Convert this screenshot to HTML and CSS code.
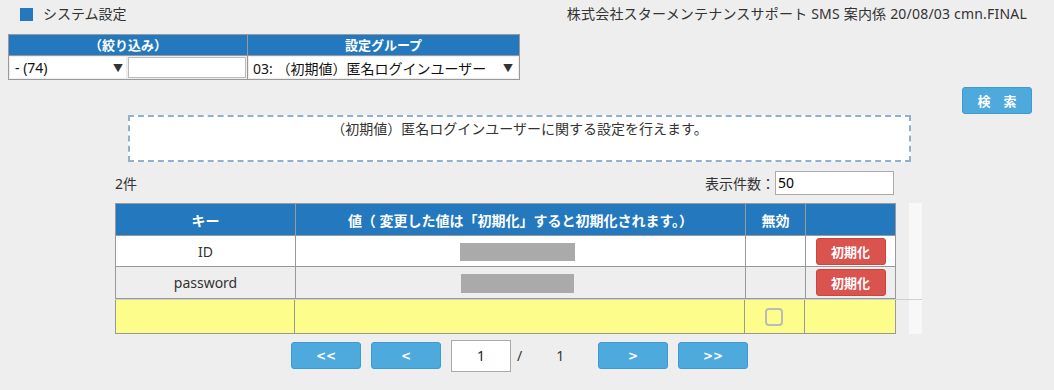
FILE: index.html
```html
<!DOCTYPE html>
<html lang="ja">
<head>
<meta charset="utf-8">
<title>システム設定</title>
<link rel="stylesheet" href="styles.css">
</head>
<body>
<div class="top">
  <div class="title"><span class="sq"></span>システム設定</div>
  <div class="info">株式会社スターメンテナンスサポート SMS 案内係 20/08/03 cmn.FINAL</div>
</div>

<table class="filter">
  <colgroup><col class="c1"><col class="c2"></colgroup>
  <tr><th>（絞り込み）</th><th>設定グループ</th></tr>
  <tr>
    <td><div class="pair"><div class="sel s1"><span>- (74)</span><span class="arr">▼</span></div><div class="txt"></div></div></td>
    <td><div class="sel s2"><span>03: （初期値）匿名ログインユーザー</span><span class="arr">▼</span></div></td>
  </tr>
</table>

<div class="search-row"><button class="btn-search">検　索</button></div>

<div class="main">
  <div class="desc">（初期値）匿名ログインユーザーに関する設定を行えます。</div>
  <div class="meta">
    <span>2件</span>
    <label class="per">表示件数：<span class="per-in">50</span></label>
  </div>
  <div class="grid">
    <div class="upper">
      <table class="data">
        <colgroup><col class="k"><col class="v"><col class="d"><col class="a"></colgroup>
        <tr><th>キー</th><th>値（ 変更した値は「初期化」すると初期化されます。）</th><th>無効</th><th></th></tr>
        <tr class="r1"><td>ID</td><td><span class="mask m1"></span></td><td></td><td><button class="btn-reset">初期化</button></td></tr>
        <tr class="r2"><td>password</td><td><span class="mask m2"></span></td><td></td><td><button class="btn-reset">初期化</button></td></tr>
      </table>
      <div class="track"></div>
    </div>
    <div class="lower">
      <table class="newrow">
        <colgroup><col class="k"><col class="v"><col class="d"><col class="a"></colgroup>
        <tr><td></td><td></td><td><span class="chk"></span></td><td></td></tr>
      </table>
      <div class="track"></div>
    </div>
  </div>
  <div class="pager">
    <button class="pbtn">&lt;&lt;</button>
    <button class="pbtn">&lt;</button>
    <div class="pg-in">1</div>
    <div class="pg-total"><span class="slash">/</span><span class="tot">1</span></div>
    <button class="pbtn">&gt;</button>
    <button class="pbtn">&gt;&gt;</button>
  </div>
</div>
</body>
</html>
```

FILE: styles.css
```css
* { box-sizing: border-box; }
html, body { margin: 0; padding: 0; background: #eeeeee; }
body {
  width: 1054px;
  height: 390px;
  overflow: hidden;
  font-family: "Noto Sans", "Noto Sans CJK JP", sans-serif;
  font-size: 14px;
  color: #333;
}

.top {
  display: flex;
  justify-content: space-between;
  align-items: center;
  height: 28px;
  padding: 0 27px 0 20px;
}
.title { display: flex; align-items: center; font-size: 14px; line-height: 18px; }
.sq { width: 13px; height: 13px; background: #2479be; margin-right: 10px; }
.info { font-size: 14px; line-height: 18px; letter-spacing: 0.2px; }

.filter {
  margin: 6px 0 0 8px;
  border-collapse: collapse;
  table-layout: fixed;
  width: 511px;
  border: 1px solid #999;
}
.filter .c1 { width: 239px; }
.filter .c2 { width: 272px; }
.filter th {
  background: #2479be;
  color: #fff;
  font-weight: bold;
  font-size: 13px;
  height: 21px;
  padding: 0;
  line-height: 20px;
  border: 1px solid #999;
}
.filter td { padding: 1px; height: 24px; border: 1px solid #999; border-top: 0; }
.pair { display: flex; gap: 2px; }
.sel {
  display: flex;
  justify-content: space-between;
  align-items: center;
  background: #fff;
  height: 21px;
  font-size: 14px;
  color: #111;
  padding: 0 3px 0 5px;
}
.s1 { width: 116px; }
.s2 { width: 100%; padding-left: 4px; padding-right: 5px; }
.arr { font-size: 10px; color: #333; }
.txt { flex: 1; height: 21px; background: #fff; border: 1px solid #bbb; }

.search-row { display: flex; justify-content: flex-end; padding-right: 22px; margin-top: 7px; }
.btn-search {
  width: 70px;
  height: 27px;
  background: #4eaadd;
  border: 1px solid #3d9ad3;
  border-radius: 3px;
  color: #fff;
  font-family: inherit;
  font-weight: bold;
  font-size: 13px;
  padding: 0;
}

.main { margin-left: 115px; width: 807px; }
.desc {
  margin: 1px 11px 0 13px;
  height: 47px;
  border: 2px dashed #8fb0d1;
  background: #fff;
  text-align: center;
  padding-top: 3px;
  line-height: 18px;
  font-size: 14px;
}
.meta {
  display: flex;
  justify-content: space-between;
  align-items: center;
  width: 779px;
  margin-top: 9px;
  height: 24px;
}
.per { display: flex; align-items: center; }
.per-in {
  width: 119px;
  height: 24px;
  background: #fff;
  border: 1px solid #aaa;
  color: #000;
  padding-left: 2px;
  line-height: 22px;
}

.grid { margin-top: 8px; }
.upper, .lower { display: flex; justify-content: space-between; }
.lower { border-top: 1px solid #d0d0d0; }
.track { width: 13px; background: #f8f8f8; }

.data, .newrow { border-collapse: collapse; table-layout: fixed; width: 780px; }
.data .k { width: 180px; }
.data .v { width: 450px; }
.data .d { width: 60px; }
.data .a { width: 90px; }
.newrow .k { width: 179px; }
.newrow .v { width: 450px; }
.newrow .d { width: 60px; }
.newrow .a { width: 91px; }
.data th, .data td, .newrow td {
  border: 1px solid #999;
  padding: 0;
  text-align: center;
  vertical-align: middle;
}
.data th {
  background: #2479be;
  color: #fff;
  font-weight: bold;
  font-size: 14px;
  height: 32px;
}
.data td { height: 31px; font-size: 14px; }
.r1 td { background: #fff; }
.r2 td { background: #eee; height: 32px; }
.mask { display: inline-block; background: #aaa; vertical-align: middle; }
.m1 { width: 115px; height: 18px; margin-left: -6px; }
.m2 { width: 113px; height: 19px; margin-left: -7px; }
.btn-reset {
  width: 70px;
  height: 27px;
  background: #d9534f;
  border: 1px solid #d0443f;
  border-radius: 3px;
  color: #fff;
  font-family: inherit;
  font-weight: bold;
  font-size: 13px;
  padding: 0;
  vertical-align: middle;
}
.newrow td { background: #fdfd8b; height: 33px; border-top: 0; }
.chk {
  display: inline-block;
  width: 18px;
  height: 18px;
  border: 2px solid #bbb;
  border-radius: 4px;
  vertical-align: middle;
  margin-left: -2px;
}

.pager {
  display: flex;
  align-items: center;
  margin-top: 6px;
  padding-left: 176px;
}
.pbtn {
  width: 70px;
  height: 27px;
  background: #4eaadd;
  border: 1px solid #3d9ad3;
  border-radius: 3px;
  color: #fff;
  font-family: "DejaVu Sans", sans-serif;
  font-weight: bold;
  font-size: 12px;
  padding: 0;
  margin-right: 10px;
}
.pg-in {
  width: 60px;
  height: 32px;
  background: #fff;
  border: 1px solid #aaa;
  text-align: center;
  line-height: 30px;
  color: #222;
}
.pg-total { width: 87px; display: flex; align-items: center; }
.slash { margin-left: 6px; }
.tot { margin-left: 34px; }
```
